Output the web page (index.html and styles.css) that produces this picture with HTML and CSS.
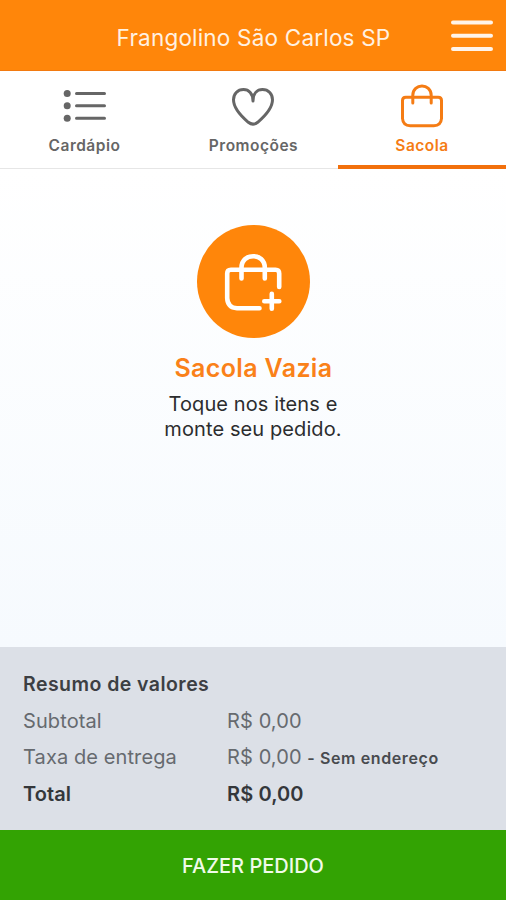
FILE: index.html
```html
<!DOCTYPE html>
<html lang="pt-BR">
<head>
  <meta charset="UTF-8">
  <title>Frangolino São Carlos SP</title>
  <meta name="viewport" content="width=device-width, initial-scale=1">
  <link rel="stylesheet" href="styles.css">
</head>
<body>
  <header class="header">
    <h1>Frangolino São Carlos SP</h1>
    <button class="menu-btn" aria-label="Menu">
      <svg viewBox="0 0 42 32" width="42" height="32">
        <path d="M2 2.5H40M2 15.7H40M2 29H40"/>
      </svg>
    </button>
  </header>

  <!-- Tabs -->
  <nav class="tabs">
    <a class="tab">
      <svg class="tab-icon" viewBox="0 0 44 44" width="44" height="44">
        <path d="M14.5 9.5H42.5M14.5 21.8H42.5M14.5 34.2H42.5"/>
        <circle cx="5.2" cy="9.5" r="3.5"/>
        <circle cx="5.2" cy="21.8" r="3.5"/>
        <circle cx="5.2" cy="34.2" r="3.5"/>
      </svg>
      <span>Cardápio</span>
    </a>
    <a class="tab">
      <svg class="tab-icon" viewBox="0 0 44 44" width="44" height="44">
        <path d="M22 17C22 9.5 17.8 5.6 12.5 5.6C6.5 5.6 2.5 10 2.5 15.8C2.5 24.5 10.5 32.5 17.3 38.3C20.4 40.7 23.6 40.7 26.7 38.3C33.5 32.5 41.5 24.5 41.5 15.8C41.5 10 37.5 5.6 31.5 5.6C26.2 5.6 22 9.5 22 17Z"/>
      </svg>
      <span>Promoções</span>
    </a>
    <a class="tab active">
      <svg class="tab-icon" viewBox="0 0 44 44" width="44" height="44">
        <path d="M5.8 13.2H38.2Q41.5 13.2 41.5 16.5V34.5Q41 41.6 33.8 41.7H10.2Q3 41.6 2.5 34.5V16.5Q2.5 13.2 5.8 13.2Z"/>
        <path d="M12.8 19V11.3C12.8 -1.2 31.2 -1.2 31.2 11.3V19"/>
      </svg>
      <span>Sacola</span>
    </a>
  </nav>

  <!-- Empty bag message -->
  <main class="empty-bag">
    <div class="bag-circle">
      <svg viewBox="0 0 60 60" width="60" height="60">
        <path d="M56.2 35V21.5Q56.2 17.8 52.5 17.8H7.9Q4.2 17.8 4.2 21.5V46Q4.6 55.8 14 56.2H36.5"/>
        <path d="M18.5 26.5V15.8C18.5 0.3 41.8 0.3 41.8 15.8V26.5"/>
        <path d="M48.8 41.7V56.7M41.3 49.2H56.3"/>
      </svg>
    </div>
    <h2>Sacola Vazia</h2>
    <p>Toque nos itens e<br>monte seu pedido.</p>
  </main>

  <!-- Order totals -->
  <section class="summary">
    <h3>Resumo de valores</h3>
    <div class="summary-row">
      <span>Subtotal</span>
      <span>R$ 0,00</span>
    </div>
    <div class="summary-row">
      <span>Taxa de entrega</span>
      <span>R$ 0,00 <small>- Sem endereço</small></span>
    </div>
    <div class="summary-row total">
      <span>Total</span>
      <span>R$ 0,00</span>
    </div>
  </section>

  <button class="order-btn">FAZER PEDIDO</button>
</body>
</html>
```

FILE: styles.css
```css
* {
  box-sizing: border-box;
}
body {
  margin: 0;
  height: 900px;
  display: flex;
  flex-direction: column;
  overflow: hidden;
  font-family: Inter, "Liberation Sans", sans-serif;
  background-color: #fff;
}
h1, h2, h3, p {
  margin: 0;
}
svg {
  display: block;
  fill: none;
  stroke-linecap: round;
  stroke-linejoin: round;
}
button {
  border: none;
  padding: 0;
  font-family: inherit;
  cursor: pointer;
}

.header {
  height: 71px;
  flex: none;
  display: grid;
  grid-template-columns: 56px 1fr 56px;
  align-items: center;
  background-color: #ff860a;
  border-bottom: 1px solid #f27a10;
}
.header h1 {
  grid-column: 2;
  padding: 5px 0 0 1px;
  color: #fff1e2;
  font-size: 22.5px;
  font-weight: 400;
  letter-spacing: 0.2px;
  text-align: center;
  white-space: nowrap;
}
.menu-btn {
  padding: 1px 0 0 1px;
  background: none;
}
.menu-btn svg {
  stroke: #fff4ea;
  stroke-width: 4;
}

.tabs {
  height: 98px;
  flex: none;
  display: grid;
  grid-template-columns: 1fr 1fr 168px;
}
.tab {
  display: flex;
  flex-direction: column;
  align-items: center;
  padding-top: 13px;
  color: #666;
  font-size: 15.5px;
  font-weight: 600;
  line-height: 20px;
  letter-spacing: 0.5px;
  border-bottom: 1px solid #e6e6e6;
}
.tab span {
  margin-top: 8px;
}
.tab-icon {
  margin-right: 1px;
  stroke: currentColor;
  stroke-width: 3;
}
.tab-icon circle {
  fill: currentColor;
  stroke: none;
}
.tab.active {
  color: #f57c14;
  border-bottom: 4px solid #f2700c;
}
.tab.active .tab-icon {
  margin-right: 0;
}

.empty-bag {
  flex: 1;
  display: flex;
  flex-direction: column;
  align-items: center;
  padding-top: 56px;
  background: linear-gradient(#fff, #f6fafe);
  text-align: center;
}
.bag-circle {
  width: 113px;
  height: 113px;
  display: flex;
  align-items: center;
  justify-content: center;
  border-radius: 50%;
  background-color: #ff860a;
}
.bag-circle svg {
  stroke: #fff;
  stroke-width: 4.6;
}
.empty-bag h2 {
  margin-top: 15px;
  padding-left: 1px;
  color: #fa8119;
  font-size: 25px;
  font-weight: 600;
  line-height: 30px;
  letter-spacing: 0.35px;
}
.empty-bag p {
  margin-top: 9px;
  color: #2c2d2e;
  font-size: 20px;
  line-height: 25px;
  letter-spacing: 0.1px;
}

.summary {
  height: 183px;
  flex: none;
  padding: 19px 23px 0;
  background-color: #dce0e7;
  color: #666a6f;
  font-size: 20px;
  line-height: 36px;
}
.summary h3 {
  margin-bottom: 1px;
  color: #3c3f43;
  font-size: 19.5px;
  font-weight: 600;
  letter-spacing: 0.45px;
}
.summary-row {
  display: grid;
  grid-template-columns: 204px 1fr;
  letter-spacing: 0.1px;
}
.summary-row small {
  color: #484b4f;
  font-size: 16px;
  font-weight: 600;
  letter-spacing: 0.6px;
}
.total {
  color: #34373b;
  font-weight: 600;
}

.order-btn {
  height: 70px;
  flex: none;
  padding-top: 1px;
  background-color: #33a303;
  color: #f1fbea;
  font-size: 20px;
  font-weight: 500;
}
```
